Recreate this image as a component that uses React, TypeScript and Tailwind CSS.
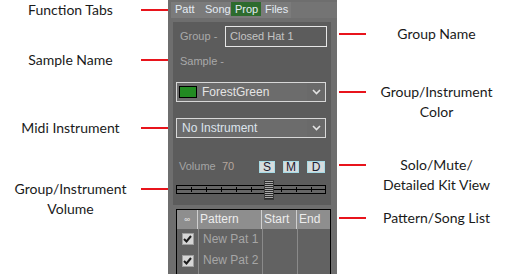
import React from 'react';

const Chevron: React.FC = () => (
  <svg width="9" height="6" viewBox="0 0 9 6" className="block">
    <polyline points="1,1 4.5,4.5 8,1" fill="none" stroke="#e4e4e4" strokeWidth="1.6" />
  </svg>
);

const Check: React.FC = () => (
  <div className="w-[12px] h-[12px] bg-[#d6d6d6] border border-[#a0a0a0] flex items-center justify-center">
    <svg width="9" height="8" viewBox="0 0 9 8">
      <polyline points="1,4 3.5,6.5 8,1" fill="none" stroke="#1c1c1c" strokeWidth="2" />
    </svg>
  </div>
);

const Callout: React.FC<{ lines: string[]; top: number; side: 'left' | 'right' }> = ({ lines, top, side }) => (
  <div className={`flex items-start ${side === 'right' ? 'flex-row-reverse' : ''}`} style={{ marginTop: top }}>
    <div className="w-[141px] text-center text-[14px] leading-[20px] text-[#1a1a1a]">
      {lines.map((l) => (
        <div key={l}>{l}</div>
      ))}
    </div>
    <div className="w-[27px] h-[2px] bg-[#e8141c] mt-[9px]" />
  </div>
);

const ticks = [14, 29, 44, 59, 74, 104, 119, 134];

export default function App() {
  return (
    <div className="w-[508px] h-[274px] bg-white flex overflow-hidden font-['Lato',sans-serif]">
      {/* left callouts */}
      <div className="w-[168px] shrink-0 flex flex-col">
        <Callout side="left" top={0} lines={['Function Tabs']} />
        <Callout side="left" top={30} lines={['Sample Name']} />
        <Callout side="left" top={48} lines={['Midi Instrument']} />
        <Callout side="left" top={41} lines={['Group/Instrument', 'Volume']} />
      </div>

      {/* panel */}
      <div className="w-[169px] shrink-0 h-[274px] bg-[#6e6e6e] flex flex-col font-['Liberation_Sans',sans-serif] text-[11px]">
        {/* tabs */}
        <div className="h-[22px] flex pt-[2px]">
          <div className="w-[3px] shrink-0" />
          <div className="w-[120px] shrink-0 h-[16px] bg-[#7b7b7b] flex">
            {['Patt', 'Song', 'Prop', 'Files'].map((t) => (
              <div
                key={t}
                className={`w-[30px] shrink-0 h-[14px] pl-[4px] leading-[14px] text-[11px] text-[#e4ecf4] ${t === 'Prop' ? 'bg-[#2d6b2d]' : ''}`}
              >
                {t}
              </div>
            ))}
          </div>
          <div className="flex-1 h-[16px] bg-[#747474]" />
        </div>

        {/* properties */}
        <div className="ml-[5px] w-[158px] h-[183px] bg-[#5c5c5c] flex flex-col pl-[3px]">
          <div className="flex items-center mt-[4px] h-[21px]">
            <div className="ml-[4px] w-[45px] shrink-0 text-[#a9a9a9]">Group -</div>
            <div className="w-[102px] shrink-0 h-[21px] border border-[#e6e6e6] pl-[4px] leading-[19px] text-[#c4c4c4]">
              Closed Hat 1
            </div>
          </div>
          <div className="ml-[4px] mt-[7px] h-[14px] leading-[14px] text-[#a9a9a9]">Sample -</div>

          <div className="mt-[14px] w-[150px] h-[20px] border border-[#d8d8d8] bg-[#6c6c6c] flex items-center">
            <div className="ml-[2px] w-[18px] h-[12px] bg-[#228b22] border border-black" />
            <div className="ml-[5px] flex-1 text-[12px] text-[#e4e4e4]">ForestGreen</div>
            <div className="w-[18px] h-full bg-[#6a6a6a] flex items-center justify-center">
              <Chevron />
            </div>
          </div>

          <div className="mt-[16px] w-[150px] h-[20px] border border-[#d8d8d8] bg-[#6c6c6c] flex items-center">
            <div className="ml-[5px] flex-1 text-[12px] text-[#dce4ec]">No Instrument</div>
            <div className="w-[18px] h-full bg-[#6a6a6a] flex items-center justify-center">
              <Chevron />
            </div>
          </div>

          <div className="mt-[23px] h-[11px] flex items-center">
            <div className="ml-[3px] w-[43px] shrink-0 text-[#a4a4a4]">Volume</div>
            <div className="w-[37px] shrink-0 text-[#b6a69c]">70</div>
            {['S', 'M', 'D'].map((b, i) => (
              <div
                key={b}
                className={`${b === 'D' ? 'w-[18px]' : 'w-[16px]'} ${i > 0 ? 'ml-[8px]' : ''} shrink-0 h-[12px] bg-[#d6dcde] border border-[#a6dbe6] text-[12px] leading-[10px] text-center text-[#1c2030]`}
              >
                {b}
              </div>
            ))}
          </div>

          <div className="mt-[8px] relative w-[150px] h-[20px]">
            <div className="absolute left-0 right-0 top-[5px] h-[9px] border border-black bg-[#666]">
              <div className="absolute left-0 right-0 top-[3px] h-px bg-black" />
              {ticks.map((x) => (
                <div key={x} className="absolute top-[1px] w-px h-[5px] bg-black" style={{ left: x }} />
              ))}
            </div>
            <div className="absolute left-[88px] top-0 w-[10px] h-[20px] border border-[#3a3a3a] bg-[repeating-linear-gradient(#a8a8a8_0px,#a8a8a8_1px,#2c2c2c_1px,#2c2c2c_2px)]" />
          </div>
        </div>

        {/* pattern list */}
        <div className="mt-[4px] ml-[8px] w-[155px] flex-1 border-t border-l border-r border-black bg-[#626262] flex flex-col">
          <div className="h-[19px] bg-[#8e8e8e] flex text-[12px] text-[#ececec] leading-[19px]">
            <div className="w-[21px] border-r border-[#cfcfcf] text-center text-[8px] text-[#f0f0f0]">∞</div>
            <div className="w-[64px] border-r border-[#cfcfcf] pl-[2px]">Pattern</div>
            <div className="w-[35px] border-r border-[#cfcfcf] pl-[2px]">Start</div>
            <div className="flex-1 pl-[2px]">End</div>
          </div>
          <div className="flex-1 flex">
            <div className="w-[21px] flex flex-col items-center pt-[4px] gap-[10px]">
              <Check />
              <Check />
            </div>
            <div className="w-[64px] border-l border-[#8a8a8a] pl-[4px] flex flex-col text-[12px] text-[#a6a6a6] leading-[21px]">
              <div>New Pat 1</div>
              <div>New Pat 2</div>
            </div>
            <div className="w-[35px] border-l border-[#8a8a8a]" />
            <div className="flex-1 border-l border-[#8a8a8a]" />
          </div>
        </div>
      </div>

      {/* right callouts */}
      <div className="ml-[2px] w-[168px] shrink-0 flex flex-col">
        <Callout side="right" top={24} lines={['Group Name']} />
        <Callout side="right" top={38} lines={['Group/Instrument', 'Color']} />
        <Callout side="right" top={33} lines={['Solo/Mute/', 'Detailed Kit View']} />
        <Callout side="right" top={13} lines={['Pattern/Song List']} />
      </div>
    </div>
  );
}
